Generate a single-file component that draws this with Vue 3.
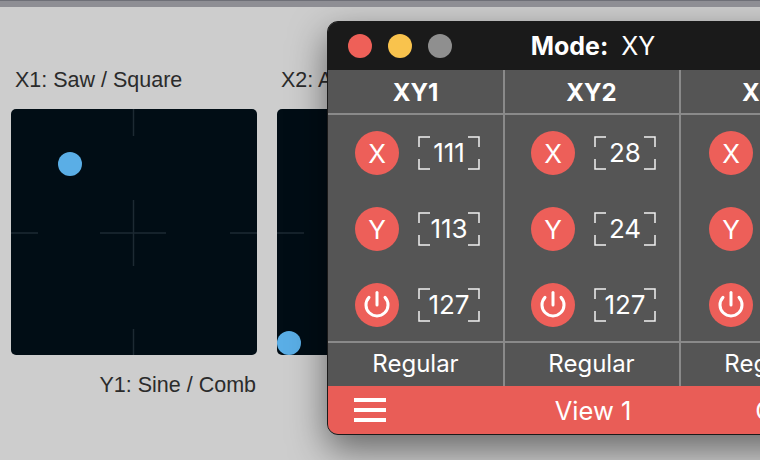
<script setup>
const pads = [
  { id: 'a', top: 'X1: Saw / Square', bottom: 'Y1: Sine / Comb', x: 59, y: 55 },
  { id: 'b', top: 'X2: Amp / Pan', bottom: 'Y2: Cut / Res', x: 12, y: 234 }
]
const ticks = [
  [122.5, 0, 122.5, 27], [122.5, 91, 122.5, 157], [122.5, 220, 122.5, 246],
  [0, 124, 27, 124], [89, 124, 155, 124], [219, 124, 246, 124]
]
const columns = [
  { name: 'XY1', x: 111, y: 113, p: 127 },
  { name: 'XY2', x: 28, y: 24, p: 127 },
  { name: 'XY3', x: 64, y: 64, p: 127 }
]
const corners = ['M1 11V1H12', 'M50 1H61V11', 'M1 23V33H12', 'M50 33H61V23']
</script>

<template>
  <div class="desktop">
    <div class="strip"></div>
    <div class="pads">
      <div v-for="pad in pads" :key="pad.id" class="pad-group">
        <div class="label">{{ pad.top }}</div>
        <svg class="pad" width="246" height="246" viewBox="0 0 246 246">
          <line v-for="(t, i) in ticks" :key="i" :x1="t[0]" :y1="t[1]" :x2="t[2]" :y2="t[3]" class="tick" />
          <circle :cx="pad.x" :cy="pad.y" r="12" class="dot" />
        </svg>
        <div class="label label-end">{{ pad.bottom }}</div>
      </div>
    </div>

    <section class="window">
      <header class="titlebar">
        <div class="lights">
          <span class="light red"></span>
          <span class="light yellow"></span>
          <span class="light grey"></span>
        </div>
        <div class="title"><b>Mode:</b><span>XY</span></div>
      </header>
      <div class="columns">
        <div v-for="col in columns" :key="col.name" class="column">
          <div class="col-head">{{ col.name }}</div>
          <div class="col-body">
            <div class="row">
              <span class="btn">X</span>
              <span class="value">
                <svg class="brackets" width="62" height="34" viewBox="0 0 62 34"><path v-for="c in corners" :key="c" :d="c" /></svg>
                {{ col.x }}
              </span>
            </div>
            <div class="row">
              <span class="btn">Y</span>
              <span class="value">
                <svg class="brackets" width="62" height="34" viewBox="0 0 62 34"><path v-for="c in corners" :key="c" :d="c" /></svg>
                {{ col.y }}
              </span>
            </div>
            <div class="row">
              <span class="btn">
                <svg width="26" height="28" viewBox="0 0 26 28" class="power">
                  <path d="M5 6.4A11 11 0 1 0 21 6.4" />
                  <path d="M13 1.5V14" />
                </svg>
              </span>
              <span class="value">
                <svg class="brackets" width="62" height="34" viewBox="0 0 62 34"><path v-for="c in corners" :key="c" :d="c" /></svg>
                {{ col.p }}
              </span>
            </div>
          </div>
          <div class="col-foot">Regular</div>
        </div>
      </div>
      <footer class="footer">
        <div class="menu"><i></i><i></i><i></i></div>
        <div class="view">View 1</div>
        <div class="extra">O</div>
      </footer>
    </section>
  </div>
</template>

<style>
html, body { margin: 0; background: #cdcdcd; }
</style>

<style scoped>
.desktop {
  position: relative;
  width: 760px;
  height: 460px;
  overflow: hidden;
  background: #cdcdcd;
  font-family: "Inter", "Liberation Sans", sans-serif;
}
.strip {
  position: relative;
  z-index: 3;
  height: 6px;
  background: #8e8e94;
  border-top: 1px solid #6e6f77;
}
.pads {
  display: flex;
  gap: 20px;
  padding: 60px 0 0 11px;
}
.pad-group {
  display: flex;
  flex-direction: column;
  width: 246px;
  flex: none;
}
.label {
  font-family: "Liberation Sans", sans-serif;
  font-size: 21.5px;
  line-height: 26px;
  height: 42px;
  color: #2b2b2b;
  padding-left: 4px;
  white-space: nowrap;
}
.label-end {
  padding: 17px 1px 0 0;
  text-align: right;
}
.pad {
  display: block;
  background: #010d15;
  border-radius: 5px;
}
.tick {
  stroke: #1d2a33;
  stroke-width: 1.5;
}
.dot { fill: #5aaee6; }

.window {
  position: absolute;
  z-index: 2;
  left: 327px;
  top: 21px;
  width: 532px;
  height: 414px;
  box-sizing: border-box;
  display: flex;
  flex-direction: column;
  border: 1px solid #1a1a1a;
  border-radius: 11px;
  overflow: hidden;
  background: #555;
  box-shadow: 0 14px 36px rgba(0, 0, 0, 0.5);
  color: #fff;
}
.titlebar {
  position: relative;
  flex: none;
  height: 48px;
  display: flex;
  align-items: center;
  justify-content: center;
  background: #1a1a1a;
}
.lights {
  position: absolute;
  left: 20px;
  top: 12px;
  display: flex;
  gap: 16px;
}
.light {
  width: 24px;
  height: 24px;
  border-radius: 50%;
}
.red { background: #ee6058; }
.yellow { background: #f9c34d; }
.grey { background: #8f8f8f; }
.title {
  display: flex;
  gap: 13px;
  font-size: 25px;
  line-height: 48px;
}
.title b { font-weight: 700; }
.columns {
  flex: none;
  display: flex;
  padding-left: 1px;
}
.column {
  flex: none;
  width: 176px;
  box-sizing: border-box;
  border-right: 2px solid #8a8a8a;
}
.col-head {
  height: 45px;
  box-sizing: border-box;
  border-bottom: 2px solid #8a8a8a;
  margin-left: -1px;
  text-align: center;
  font-size: 24px;
  font-weight: 700;
  line-height: 45px;
}
.col-body {
  height: 226px;
  box-sizing: border-box;
  padding: 16px 0 14px 26px;
  display: flex;
  flex-direction: column;
  gap: 32px;
}
.column:nth-child(3) .col-body {
  padding-left: 28px;
}
.row {
  height: 44px;
  display: flex;
  align-items: center;
  gap: 19px;
}
.btn {
  flex: none;
  width: 44px;
  height: 44px;
  border-radius: 50%;
  background: #ed5f59;
  display: flex;
  align-items: center;
  justify-content: center;
  font-size: 26px;
  font-weight: 400;
}
.power {
  fill: none;
  stroke: #fff;
  stroke-width: 3;
  stroke-linecap: round;
}
.value {
  position: relative;
  flex: none;
  width: 62px;
  height: 34px;
  display: flex;
  align-items: center;
  justify-content: center;
  font-size: 26px;
  line-height: 34px;
}
.brackets {
  position: absolute;
  left: 0;
  top: 0;
  fill: none;
  stroke: #efefef;
  stroke-width: 1.5;
}
.col-foot {
  height: 45px;
  box-sizing: border-box;
  border-top: 2px solid #8a8a8a;
  margin-left: -1px;
  text-align: center;
  font-size: 24px;
  line-height: 41px;
}
.footer {
  flex: 1;
  display: grid;
  grid-template-columns: 1fr auto 1fr;
  align-items: center;
  background: #e95d57;
}
.menu {
  display: flex;
  flex-direction: column;
  gap: 6px;
  width: 32px;
  padding-left: 26px;
}
.menu i {
  display: block;
  height: 4px;
  background: #fff;
}
.view {
  font-size: 25.5px;
}
.extra {
  font-size: 25.5px;
  padding-left: 124px;
}
</style>
